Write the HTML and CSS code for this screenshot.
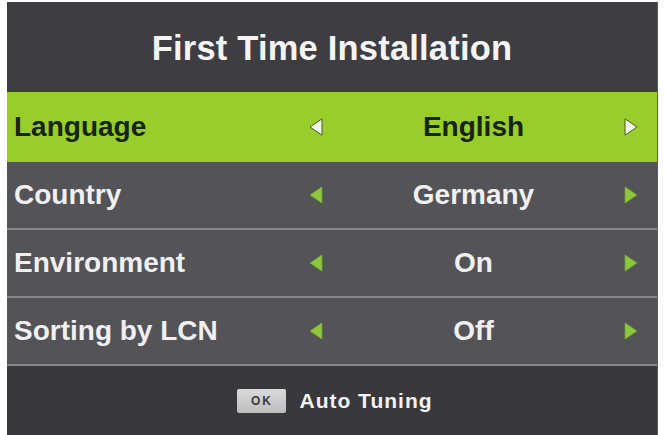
FILE: index.html
```html
<!DOCTYPE html>
<html lang="en">
<head>
<meta charset="utf-8">
<title>First Time Installation</title>
<link rel="stylesheet" href="styles.css">
</head>
<body>
<div class="panel">
  <div class="header">First Time Installation</div>
  <div class="row active">
    <span class="label">Language</span>
    <svg class="arrow" viewBox="0 0 14 18"><polygon points="13,0.8 13,17.2 1,9"/></svg>
    <span class="value">English</span>
    <svg class="arrow" viewBox="0 0 14 18"><polygon points="1,0.8 1,17.2 13,9"/></svg>
  </div>
  <div class="row">
    <span class="label">Country</span>
    <svg class="arrow" viewBox="0 0 14 18"><polygon points="13,0.8 13,17.2 1,9"/></svg>
    <span class="value">Germany</span>
    <svg class="arrow" viewBox="0 0 14 18"><polygon points="1,0.8 1,17.2 13,9"/></svg>
  </div>
  <div class="row">
    <span class="label">Environment</span>
    <svg class="arrow" viewBox="0 0 14 18"><polygon points="13,0.8 13,17.2 1,9"/></svg>
    <span class="value">On</span>
    <svg class="arrow" viewBox="0 0 14 18"><polygon points="1,0.8 1,17.2 13,9"/></svg>
  </div>
  <div class="row">
    <span class="label">Sorting by LCN</span>
    <svg class="arrow" viewBox="0 0 14 18"><polygon points="13,0.8 13,17.2 1,9"/></svg>
    <span class="value">Off</span>
    <svg class="arrow" viewBox="0 0 14 18"><polygon points="1,0.8 1,17.2 13,9"/></svg>
  </div>
  <div class="footer">
    <span class="okkey">OK</span>
    <span class="hint">Auto Tuning</span>
  </div>
</div>
</body>
</html>
```

FILE: styles.css
```css
html, body {
  margin: 0;
  padding: 0;
  background: #ffffff;
  overflow: hidden;
}

.panel {
  margin: 2px 0 0 7px;
  width: 651px;
  font-family: "Liberation Sans", Arial, sans-serif;
  font-weight: bold;
  background: #38383d;
  border-right: 1px solid #5a5a60;
  box-sizing: border-box;
}

.header {
  height: 90px;
  display: flex;
  align-items: center;
  justify-content: center;
  background: #3d3d42;
  color: #f4f4f4;
  font-size: 34.5px;
  letter-spacing: 0.2px;
  padding-top: 2px;
  box-sizing: border-box;
}

.row {
  height: 68px;
  display: flex;
  align-items: center;
  padding: 0 19px 0 7px;
  background: #535358;
  color: #f0f0f0;
  font-size: 28px;
  border-bottom: 2px solid #86868c;
  box-sizing: border-box;
}

.row.active {
  height: 70px;
  background: #98cd2c;
  color: #17230d;
  border-bottom: none;
}

.label {
  flex: 0 0 295px;
}

.value {
  flex: 1;
  text-align: center;
}

.arrow {
  flex: 0 0 14px;
  width: 14px;
  height: 18px;
  display: block;
}

.arrow polygon {
  fill: #8cc83a;
  stroke: #6fa22c;
  stroke-width: 0.8;
  stroke-linejoin: round;
}

.row.active .arrow polygon {
  fill: #f1f6e4;
  stroke: #4a5a2a;
  stroke-width: 1;
}

.footer {
  height: 69px;
  display: flex;
  align-items: center;
  justify-content: center;
  gap: 13px;
  padding-left: 6px;
  background: #38383d;
}

.okkey {
  width: 49px;
  height: 24px;
  display: flex;
  align-items: center;
  justify-content: center;
  background: linear-gradient(#dadada, #bdbdbd);
  border-radius: 2px;
  color: #3a3a3a;
  font-size: 12px;
  letter-spacing: 2px;
}

.hint {
  color: #f2f2f2;
  font-size: 21px;
  letter-spacing: 1px;
}
```
